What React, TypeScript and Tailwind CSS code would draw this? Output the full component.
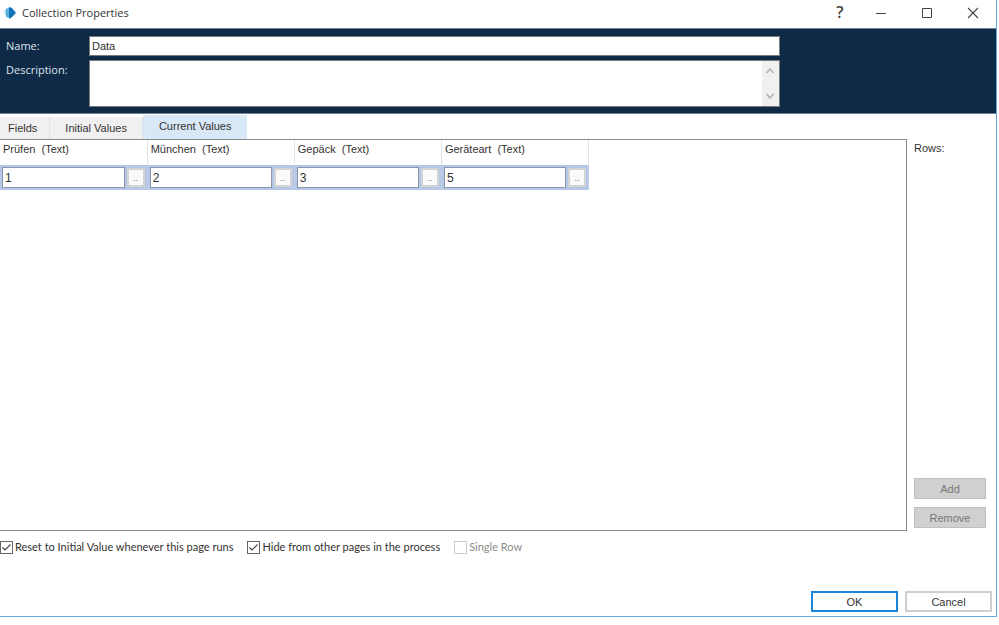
import { useState } from "react";

const tabs = ["Fields", "Initial Values", "Current Values"];

const columns = [
  { name: "Prüfen", value: "1" },
  { name: "München", value: "2" },
  { name: "Gepäck", value: "3" },
  { name: "Geräteart", value: "5" },
];

function AppIcon() {
  return (
    <svg className="h-3 w-3" viewBox="0 0 12 12" aria-hidden="true">
      <path d="M0 4 L3 1 L3 10 L1 8Z" fill="#b5e0f0" />
      <path d="M2 2 L6 0 L6 11 L2 10Z" fill="#5ab0dc" />
      <path d="M5 0 L8 1 L12 6 L8 10 L5 12Z" fill="#1173b8" />
    </svg>
  );
}

function TitleBar() {
  return (
    <header className="flex h-7 items-center justify-between pb-[3px] pl-1">
      <div className="flex items-center gap-[6px]">
        <AppIcon />
        <h1 className="font-['Open_Sans',sans-serif] text-[11px] leading-4 text-[#333]">
          Collection Properties
        </h1>
      </div>
      <div className="flex items-center text-[#444]">
        <button
          aria-label="Help"
          className="flex h-6 w-9 items-center justify-center pb-[2px] font-['Open_Sans',sans-serif] text-base font-semibold"
        >
          ?
        </button>
        <button aria-label="Minimize" className="flex h-6 w-[46px] items-center justify-center">
          <svg className="h-3 w-3" viewBox="0 0 12 12" fill="none" stroke="currentColor">
            <path d="M1 6.5h10" />
          </svg>
        </button>
        <button aria-label="Maximize" className="flex h-6 w-[46px] items-center justify-center">
          <svg className="h-3 w-3" viewBox="0 0 12 12" fill="none" stroke="currentColor">
            <path d="M1.5 1.5h9v9h-9z" />
          </svg>
        </button>
        <button aria-label="Close" className="flex h-6 w-[46px] items-center justify-center">
          <svg className="h-3 w-3" viewBox="0 0 12 12" fill="none" stroke="currentColor" strokeWidth="1.1">
            <path d="M1 1l10 10M11 1L1 11" />
          </svg>
        </button>
      </div>
    </header>
  );
}

function Details() {
  const [name, setName] = useState("Data");

  return (
    <section className="flex flex-col gap-1 border-y border-[#6f7f92] bg-[#0e2a47] pt-[7px] pb-[6px] pl-[6px]">
      <div className="flex items-center">
        <label
          htmlFor="name"
          className="w-[83px] shrink-0 font-['Open_Sans',sans-serif] text-[11px] leading-4 text-[#dfe4e9]"
        >
          Name:
        </label>
        <input
          id="name"
          value={name}
          onChange={(e) => setName(e.target.value)}
          className="h-5 w-full max-w-[691px] border border-[#7a7a7a] bg-white px-[2px] text-[11px] text-[#333]"
        />
      </div>
      <div className="flex items-start">
        <label
          htmlFor="description"
          className="w-[83px] shrink-0 pt-[2px] font-['Open_Sans',sans-serif] text-[11px] leading-4 text-[#dfe4e9]"
        >
          Description:
        </label>
        <div className="flex h-[47px] w-full max-w-[691px] border border-[#7a7a7a] bg-white">
          <textarea id="description" className="flex-1 resize-none px-[2px] text-[11px] outline-none" />
          <div className="flex w-[17px] flex-col items-center justify-between bg-[#f0f0f0] py-[6px] pr-px text-[#b4b4b4]">
            <svg className="h-2 w-2" viewBox="0 0 8 8" fill="none" stroke="currentColor" strokeWidth="1.8">
              <path d="M0.5 6l3.5-4 3.5 4" />
            </svg>
            <svg className="h-2 w-2" viewBox="0 0 8 8" fill="none" stroke="currentColor" strokeWidth="1.8">
              <path d="M0.5 2l3.5 4 3.5-4" />
            </svg>
          </div>
        </div>
      </div>
    </section>
  );
}

function ValuesTable() {
  return (
    <table className="w-[589px] table-fixed border-collapse">
      <thead>
        <tr className="h-[25px]">
          {columns.map((col) => (
            <th
              key={col.name}
              className="border-r border-[#e4e4e4] px-[3px] pt-px text-left align-top font-normal whitespace-pre"
            >
              {col.name}
              {"  (Text)"}
            </th>
          ))}
        </tr>
      </thead>
      <tbody>
        <tr className="h-[25px] bg-[#b4c7e7]">
          {columns.map((col) => (
            <td key={col.name} className="border-r border-[#c3cfe4] p-0">
              <div className="flex items-center gap-[2px] px-[2px]">
                <input
                  aria-label={col.name}
                  defaultValue={col.value}
                  className="h-[21px] min-w-0 flex-1 border border-[#8c96a6] bg-white px-[2px] text-xs text-[#333]"
                />
                <button
                  aria-label={`Edit ${col.name}`}
                  className="h-[19px] w-[18px] border-2 border-[#d4d4d4] bg-[#fafafa] text-[9px] leading-3 text-[#777]"
                >
                  ..
                </button>
              </div>
            </td>
          ))}
        </tr>
      </tbody>
    </table>
  );
}

function CheckOption({
  label,
  defaultChecked = false,
  disabled = false,
}: {
  label: string;
  defaultChecked?: boolean;
  disabled?: boolean;
}) {
  return (
    <label
      className={`flex items-center gap-[2px] font-['Lato',sans-serif] ${disabled ? "text-[#8c8c8c]" : ""}`}
    >
      <span className="relative h-[13px] w-[13px]">
        <input
          type="checkbox"
          defaultChecked={defaultChecked}
          disabled={disabled}
          className="peer block h-[13px] w-[13px] appearance-none border border-[#666] bg-white disabled:border-[#ccc]"
        />
        <svg
          className="pointer-events-none absolute inset-0 hidden h-[13px] w-[13px] peer-checked:block"
          viewBox="0 0 13 13"
          fill="none"
          stroke="#444"
          strokeWidth="1.2"
        >
          <path d="M2.5 6.5l2.5 2.5 5.5-5.5" />
        </svg>
      </span>
      {label}
    </label>
  );
}

export default function App() {
  const [active, setActive] = useState("Current Values");

  return (
    <div className="min-h-screen bg-white pr-[2px] pb-2 font-['Liberation_Sans',sans-serif] text-[11px] leading-4 text-[#333]">
      <main className="flex min-h-[calc(100vh-8px)] flex-col border-r border-b border-[#6aaae0]">
        <TitleBar />
        <Details />

        <div role="tablist" className="flex h-[25px] items-end">
          {tabs.map((tab) => (
            <button
              key={tab}
              role="tab"
              aria-selected={tab === active}
              onClick={() => setActive(tab)}
              className={
                tab === active
                  ? "h-6 bg-[#d8e8f7] px-4 pb-[2px]"
                  : "h-[22px] border-r border-[#e2e2e2] bg-[#f0f0f0] pr-3 pl-2 nth-2:px-[15px]"
              }
            >
              {tab}
            </button>
          ))}
        </div>

        <div className="flex flex-1">
          <div className="flex-1 border border-l-0 border-[#8a8a8a]">
            <ValuesTable />
          </div>
          <aside className="flex w-[89px] flex-col gap-2 pt-px pr-[10px] pb-[3px] pl-[7px]">
            <span className="flex-1">Rows:</span>
            <button disabled className="h-[21px] border border-[#bfbfbf] bg-[#d0d0d0] text-[#777]">
              Add
            </button>
            <button disabled className="h-[21px] border border-[#bfbfbf] bg-[#d0d0d0] text-[#777]">
              Remove
            </button>
          </aside>
        </div>

        <div className="flex gap-[14px] pt-2">
          <CheckOption label="Reset to Initial Value whenever this page runs" defaultChecked />
          <CheckOption label="Hide from other pages in the process" defaultChecked />
          <CheckOption label="Single Row" disabled />
        </div>

        <footer className="flex justify-end gap-[7px] pt-9 pr-1 pb-1">
          <button className="h-[21px] w-[87px] border-2 border-[#1a85dc] bg-white">OK</button>
          <button className="h-[21px] w-[87px] border-2 border-[#cfcfcf] bg-white">Cancel</button>
        </footer>
      </main>
    </div>
  );
}
